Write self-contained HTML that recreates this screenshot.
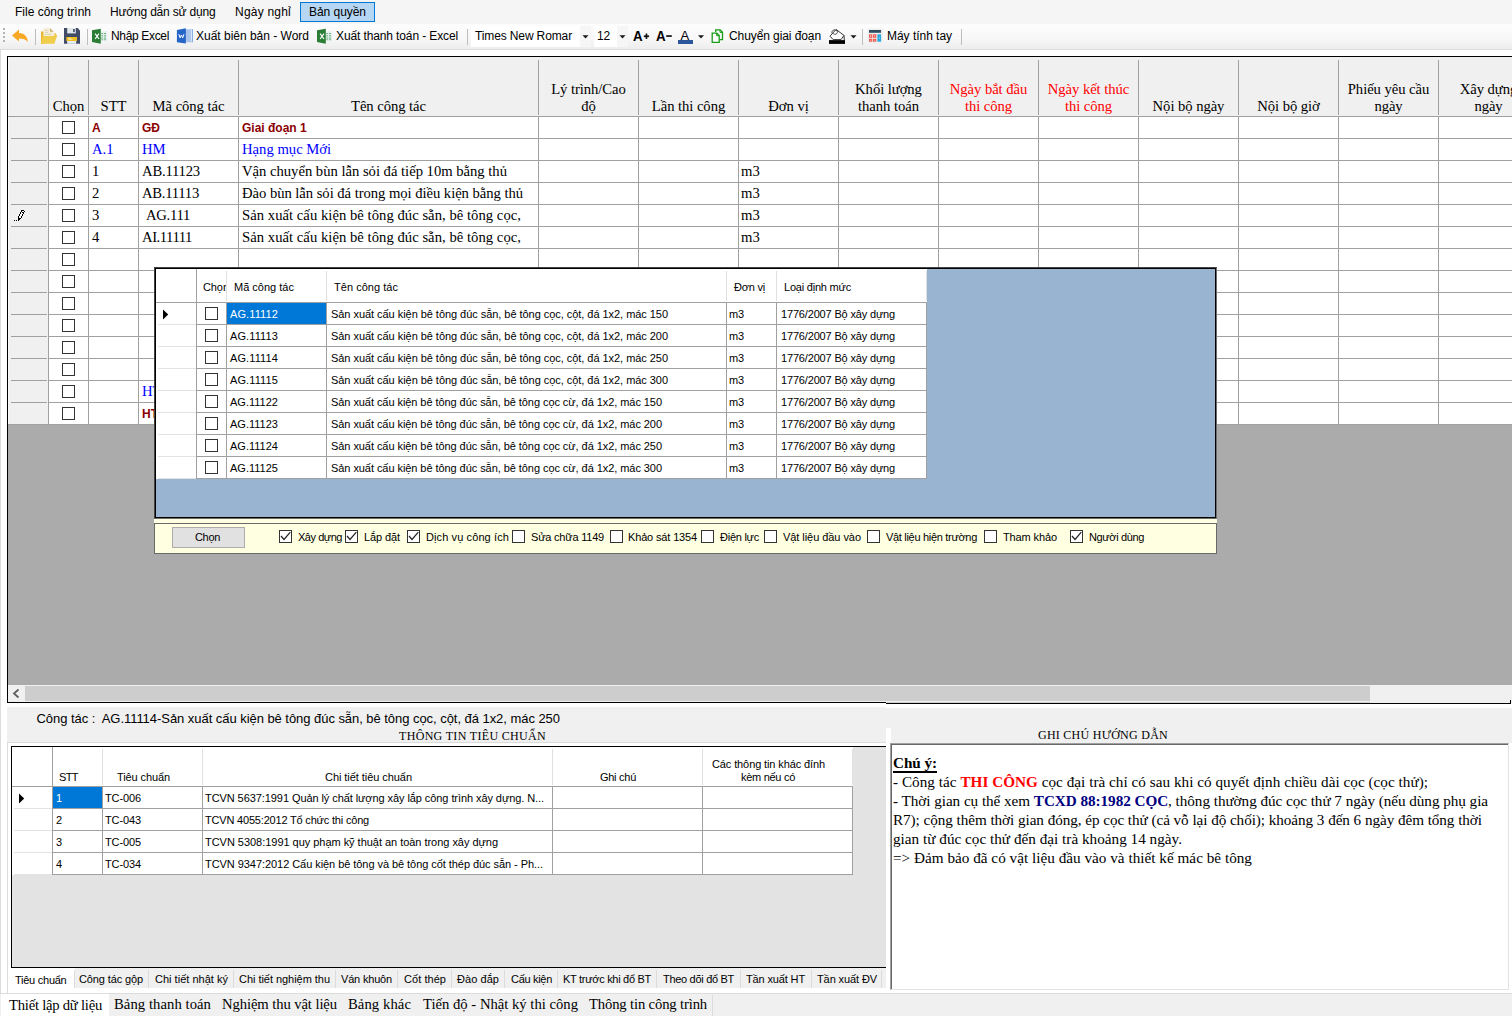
<!DOCTYPE html><html lang="vi"><head><meta charset="utf-8"><title>UI</title><style>
*{box-sizing:border-box;margin:0;padding:0}
html,body{width:1512px;height:1016px;overflow:hidden}
body{background:#f0f0f0;position:relative;font-family:"Liberation Sans",sans-serif;font-size:12px;color:#000}
.ab{position:absolute}
.t{position:absolute;white-space:pre;line-height:1}
.sf{font-family:"Liberation Serif",serif}
.vl{position:absolute;width:1px;background:#a0a0a0}
.hl{position:absolute;height:1px;background:#a0a0a0}
.cb{position:absolute;width:13px;height:13px;border:1px solid #333;background:#fff}
.mg{font-family:"Liberation Serif",serif;font-size:14.67px}
.hd{letter-spacing:-0.06px;position:absolute;font-family:"Liberation Serif",serif;font-size:14.67px;line-height:17px;text-align:center;white-space:pre}
.pp{font-size:11px}
.th{font-size:11px}
</style></head><body>
<div class="ab" style="left:0;top:0;width:1512px;height:24px;background:#f5f5f5"></div>
<div class="t" style="left:15px;top:6px;font-family:'Liberation Sans';font-size:12px;letter-spacing:-0.003px;">File công trình</div>
<div class="t" style="left:110px;top:6px;font-family:'Liberation Sans';font-size:12px;letter-spacing:-0.187px;">Hướng dẫn sử dụng</div>
<div class="t" style="left:235px;top:6px;font-family:'Liberation Sans';font-size:12px;letter-spacing:0.217px;">Ngày nghỉ</div>
<div class="ab" style="left:300px;top:2px;width:75px;height:20px;background:#b5d7f3;border:1px solid #0078d7"></div>
<div class="t" style="left:309px;top:6px;font-family:'Liberation Sans';font-size:12px;letter-spacing:-0.043px;">Bản quyền</div>
<div class="ab" style="left:0;top:24px;width:1512px;height:26px;background:linear-gradient(#fdfdfd,#f7f7f7 60%,#ededed);border-bottom:1px solid #dcdcdc"></div>
<div class="ab" style="left:3px;top:28px;width:2px;height:2px;background:#b4b4b4"></div>
<div class="ab" style="left:3px;top:32px;width:2px;height:2px;background:#b4b4b4"></div>
<div class="ab" style="left:3px;top:36px;width:2px;height:2px;background:#b4b4b4"></div>
<div class="ab" style="left:3px;top:40px;width:2px;height:2px;background:#b4b4b4"></div>
<div class="ab" style="left:35px;top:29px;width:1px;height:16px;background:#bdbdbd"></div>
<div class="ab" style="left:87px;top:29px;width:1px;height:16px;background:#bdbdbd"></div>
<div class="ab" style="left:467px;top:29px;width:1px;height:16px;background:#bdbdbd"></div>
<div class="ab" style="left:862px;top:29px;width:1px;height:16px;background:#bdbdbd"></div>
<div class="ab" style="left:961px;top:29px;width:1px;height:16px;background:#bdbdbd"></div>
<svg class="ab" style="left:0;top:24px" width="1000" height="26" viewBox="0 24 1000 26">
<path d="M12 35.5 L19 29.6 L19 33 C24.5 33 27.6 37 28 42 C25.5 39.2 23 38.4 19 38.4 L19 41.6 Z" fill="#f9a825"/>
<path d="M41 31.4 H44.5 V43.8 H41 Z" fill="#e8b830"/>
<path d="M43.4 28 H50 L53.7 31.7 V37 H43.4 Z" fill="#f6eed4"/><path d="M50 28 L53.7 31.7 H50 Z" fill="#cdb978"/><path d="M45 30.5H48M45 32.5H48M45 34.4H51.5" stroke="#d8d2c0" stroke-width="0.9"/>
<path d="M54.3 33 H55.4 L57.1 36 V36.6 H54.3 Z" fill="#eec643"/>
<path d="M41 43.8 L42.9 35.9 H57.1 L54.3 43.8 Z" fill="#f0cd4a"/>
<path d="M64 28 H77.6 L80 30.5 V43.8 H64 Z" fill="#414b68"/><rect x="67.2" y="28" width="8.6" height="5.4" fill="#e2e7ea"/><rect x="73" y="29" width="1.9" height="3.1" fill="#59637f"/><rect x="66.4" y="37" width="10.6" height="4" fill="#f0c020"/><rect x="68.3" y="38.2" width="3" height="1.4" fill="#fbf0c8"/><rect x="71.3" y="39" width="1.4" height="0.6" fill="#fbf0c8"/><rect x="67.2" y="41" width="9" height="2.8" fill="#e6ecf3"/>
<rect x="100.8" y="31.1" width="6.6" height="10.1" fill="#edf2f6"/>
<rect x="101.3" y="33" width="1.9" height="1.1" fill="#69b27a"/><rect x="104" y="33" width="2.1" height="1.1" fill="#69b27a"/>
<rect x="101.3" y="35.3" width="1.9" height="1.1" fill="#69b27a"/><rect x="104" y="35.3" width="2.1" height="1.1" fill="#69b27a"/>
<rect x="101.3" y="37.5" width="1.9" height="1.1" fill="#69b27a"/><rect x="104" y="37.5" width="2.1" height="1.1" fill="#69b27a"/>
<rect x="101.3" y="39.3" width="1.9" height="0.9" fill="#69b27a"/><rect x="104" y="39.3" width="2.1" height="0.9" fill="#69b27a"/>
<path d="M92 30.3 L100.8 28.7 V43.7 L92 42 Z" fill="#2a7d35"/>
<path d="M95.1 33.7 L99 39 M99 33.7 L95.1 39" stroke="#fff" stroke-width="1.2"/>
<rect x="325.8" y="31.1" width="6.6" height="10.1" fill="#edf2f6"/>
<rect x="326.3" y="33" width="1.9" height="1.1" fill="#69b27a"/><rect x="329" y="33" width="2.1" height="1.1" fill="#69b27a"/>
<rect x="326.3" y="35.3" width="1.9" height="1.1" fill="#69b27a"/><rect x="329" y="35.3" width="2.1" height="1.1" fill="#69b27a"/>
<rect x="326.3" y="37.5" width="1.9" height="1.1" fill="#69b27a"/><rect x="329" y="37.5" width="2.1" height="1.1" fill="#69b27a"/>
<rect x="326.3" y="39.3" width="1.9" height="0.9" fill="#69b27a"/><rect x="329" y="39.3" width="2.1" height="0.9" fill="#69b27a"/>
<path d="M317 30.3 L325.8 28.7 V43.7 L317 42 Z" fill="#2a7d35"/>
<path d="M320.1 33.7 L324 39 M324 33.7 L320.1 39" stroke="#fff" stroke-width="1.2"/>
<rect x="185.9" y="29.3" width="6.9" height="13" fill="#a9c3ea"/><rect x="190.9" y="30" width="1.1" height="11.6" fill="#dbe7f7"/><rect x="192" y="29.3" width="0.8" height="13" fill="#7fa6e0"/>
<path d="M176.9 30 L185.9 28.2 V43.6 L176.9 42.3 Z" fill="#2565c7"/>
<path d="M178.8 34.2 L180.1 37.8 L181.4 35 L182.7 37.8 L184 34.2" stroke="#fff" stroke-width="1" fill="none"/>
<rect x="471" y="26" width="109" height="21" fill="#fff"/><rect x="580" y="26" width="11" height="21" fill="#f6f6f6"/><rect x="594" y="26" width="23" height="21" fill="#fff"/><rect x="617" y="26" width="11" height="21" fill="#f6f6f6"/>
<path d="M582.5 35.3 H588.5 L585.5 38.4 Z" fill="#1a1a1a"/>
<path d="M619.5 35.3 H625.5 L622.5 38.4 Z" fill="#1a1a1a"/>
<path d="M698 35.3 H704 L701 38.4 Z" fill="#1a1a1a"/>
<path d="M850.5 35.3 H856.5 L853.5 38.4 Z" fill="#1a1a1a"/>
<rect x="643.8" y="35.4" width="5.3" height="1.7" fill="#111"/><rect x="645.6" y="33.5" width="1.7" height="5.4" fill="#111"/><rect x="666.2" y="35.2" width="5.6" height="1.7" fill="#111"/>
<rect x="678" y="40" width="15" height="4" fill="#2b579a"/>
<path d="M715.7 32 V29.9 H720.2 L722.5 32.2 V39.6 H719.9" fill="none" stroke="#169c16" stroke-width="1.3"/><path d="M720 30 V32.4 H722.4" fill="none" stroke="#169c16" stroke-width="1"/>
<path d="M712.2 33.2 H716.9 L719.2 35.5 V42.3 H712.2 Z" fill="#fff" stroke="#169c16" stroke-width="1.3"/><path d="M716.7 33.3 V35.7 H719.1" fill="none" stroke="#169c16" stroke-width="1"/>
<rect x="829" y="40.1" width="16" height="3.8" fill="#000"/>
<path d="M830 36.2 L836 29.4 L844 35.4 L841 39.6 H833.2 Z" fill="#fff" stroke="#3a3a3a" stroke-width="1"/><path d="M832.3 33.6 C830.6 30.6 834.6 28.6 837.2 31 C837.8 32.2 837.4 33.6 835.6 34.2 C834.4 34.4 833.4 34 832.8 33.2" fill="none" stroke="#3a3a3a" stroke-width="0.9"/><path d="M844 35.4 L844.4 40" stroke="#555" stroke-width="1.2"/>
<rect x="867.4" y="28.5" width="15.3" height="14.8" fill="#eeeeee"/><rect x="869" y="30" width="12" height="2.8" fill="#2f4f60"/>
<rect x="869" y="34.3" width="3.3" height="3.5" fill="#ec5a50"/><rect x="870.2" y="35.3" width="0.9" height="1.5" fill="#fbd5d2"/>
<rect x="869" y="38.8" width="3.3" height="2.9" fill="#ec5a50"/><rect x="870.2" y="39.8" width="0.9" height="0.8999999999999999" fill="#fbd5d2"/>
<rect x="873" y="34.3" width="3.3" height="3.5" fill="#ec5a50"/><rect x="874.2" y="35.3" width="0.9" height="1.5" fill="#fbd5d2"/>
<rect x="873" y="38.8" width="3.3" height="2.9" fill="#ec5a50"/><rect x="874.2" y="39.8" width="0.9" height="0.8999999999999999" fill="#fbd5d2"/>
<rect x="877.4" y="34.3" width="3.7" height="7.4" fill="#29a9e0"/><rect x="878.9" y="37.4" width="0.8" height="1.2" fill="#c9ecfb"/>
</svg>
<div class="t" style="left:111px;top:30px;font-family:'Liberation Sans';font-size:12px;letter-spacing:-0.338px;">Nhập Excel</div>
<div class="t" style="left:196px;top:30px;font-family:'Liberation Sans';font-size:12px;letter-spacing:-0.009px;">Xuất biên bản - Word</div>
<div class="t" style="left:336px;top:30px;font-family:'Liberation Sans';font-size:12px;letter-spacing:-0.12px;">Xuất thanh toán - Excel</div>
<div class="t" style="left:475px;top:30px;font-family:'Liberation Sans';font-size:12px;letter-spacing:-0.127px;">Times New Romar</div>
<div class="t" style="left:597px;top:30px;font-family:'Liberation Sans';font-size:12px;letter-spacing:-0.18px;">12</div>
<div class="t" style="left:633px;top:28.2px;font-size:15.5px;font-weight:bold;transform:scaleX(0.86);transform-origin:0 0">A</div>
<div class="t" style="left:656px;top:28.2px;font-size:15.5px;font-weight:bold;transform:scaleX(0.86);transform-origin:0 0">A</div>
<div class="t" style="left:680.6px;top:28.8px;font-size:13px">A</div>
<div class="t" style="left:729px;top:30px;font-family:'Liberation Sans';font-size:12px;letter-spacing:-0.088px;">Chuyển giai đoạn</div>
<div class="t" style="left:887px;top:30px;font-family:'Liberation Sans';font-size:12px;letter-spacing:-0.031px;">Máy tính tay</div>
<div class="ab" style="left:0;top:50px;width:1512px;height:657px;background:#fff;border-left:1px solid #dcdcdc"></div>
<div class="ab" style="left:7px;top:56px;width:1510px;height:647px;background:#ababab;border:1px solid #000"></div>
<div class="ab" style="left:8px;top:57px;width:1504px;height:59px;background:#f0f0f0"></div>
<div class="ab" style="left:8px;top:116px;width:41px;height:308px;background:#f0f0f0"></div>
<div class="ab" style="left:49px;top:116px;width:1463px;height:308px;background:#fff"></div>
<div class="ab" style="left:8px;top:57px;width:1px;height:367px;background:#fafafa"></div>
<div class="vl" style="left:48px;top:57px;height:367px"></div>
<div class="vl" style="left:88px;top:60px;height:55px"></div>
<div class="vl" style="left:88px;top:116px;height:308px"></div>
<div class="vl" style="left:138px;top:60px;height:55px"></div>
<div class="vl" style="left:138px;top:116px;height:308px"></div>
<div class="vl" style="left:238px;top:60px;height:55px"></div>
<div class="vl" style="left:238px;top:116px;height:308px"></div>
<div class="vl" style="left:538px;top:60px;height:55px"></div>
<div class="vl" style="left:538px;top:116px;height:308px"></div>
<div class="vl" style="left:638px;top:60px;height:55px"></div>
<div class="vl" style="left:638px;top:116px;height:308px"></div>
<div class="vl" style="left:738px;top:60px;height:55px"></div>
<div class="vl" style="left:738px;top:116px;height:308px"></div>
<div class="vl" style="left:838px;top:60px;height:55px"></div>
<div class="vl" style="left:838px;top:116px;height:308px"></div>
<div class="vl" style="left:938px;top:60px;height:55px"></div>
<div class="vl" style="left:938px;top:116px;height:308px"></div>
<div class="vl" style="left:1038px;top:60px;height:55px"></div>
<div class="vl" style="left:1038px;top:116px;height:308px"></div>
<div class="vl" style="left:1138px;top:60px;height:55px"></div>
<div class="vl" style="left:1138px;top:116px;height:308px"></div>
<div class="vl" style="left:1238px;top:60px;height:55px"></div>
<div class="vl" style="left:1238px;top:116px;height:308px"></div>
<div class="vl" style="left:1338px;top:60px;height:55px"></div>
<div class="vl" style="left:1338px;top:116px;height:308px"></div>
<div class="vl" style="left:1438px;top:60px;height:55px"></div>
<div class="vl" style="left:1438px;top:116px;height:308px"></div>
<div class="hl" style="left:8px;top:116px;width:1504px"></div>
<div class="hl" style="left:49px;top:138px;width:1463px"></div>
<div class="hl" style="left:11px;top:138px;width:36px"></div>
<div class="hl" style="left:49px;top:160px;width:1463px"></div>
<div class="hl" style="left:11px;top:160px;width:36px"></div>
<div class="hl" style="left:49px;top:182px;width:1463px"></div>
<div class="hl" style="left:11px;top:182px;width:36px"></div>
<div class="hl" style="left:49px;top:204px;width:1463px"></div>
<div class="hl" style="left:11px;top:204px;width:36px"></div>
<div class="hl" style="left:49px;top:226px;width:1463px"></div>
<div class="hl" style="left:11px;top:226px;width:36px"></div>
<div class="hl" style="left:49px;top:248px;width:1463px"></div>
<div class="hl" style="left:11px;top:248px;width:36px"></div>
<div class="hl" style="left:49px;top:270px;width:1463px"></div>
<div class="hl" style="left:11px;top:270px;width:36px"></div>
<div class="hl" style="left:49px;top:292px;width:1463px"></div>
<div class="hl" style="left:11px;top:292px;width:36px"></div>
<div class="hl" style="left:49px;top:314px;width:1463px"></div>
<div class="hl" style="left:11px;top:314px;width:36px"></div>
<div class="hl" style="left:49px;top:336px;width:1463px"></div>
<div class="hl" style="left:11px;top:336px;width:36px"></div>
<div class="hl" style="left:49px;top:358px;width:1463px"></div>
<div class="hl" style="left:11px;top:358px;width:36px"></div>
<div class="hl" style="left:49px;top:380px;width:1463px"></div>
<div class="hl" style="left:11px;top:380px;width:36px"></div>
<div class="hl" style="left:49px;top:402px;width:1463px"></div>
<div class="hl" style="left:11px;top:402px;width:36px"></div>
<div class="hl" style="left:49px;top:424px;width:1463px"></div>
<div class="hl" style="left:8px;top:424px;width:41px"></div>
<div class="cb" style="left:62px;top:121px"></div>
<div class="cb" style="left:62px;top:143px"></div>
<div class="cb" style="left:62px;top:165px"></div>
<div class="cb" style="left:62px;top:187px"></div>
<div class="cb" style="left:62px;top:209px"></div>
<div class="cb" style="left:62px;top:231px"></div>
<div class="cb" style="left:62px;top:253px"></div>
<div class="cb" style="left:62px;top:275px"></div>
<div class="cb" style="left:62px;top:297px"></div>
<div class="cb" style="left:62px;top:319px"></div>
<div class="cb" style="left:62px;top:341px"></div>
<div class="cb" style="left:62px;top:363px"></div>
<div class="cb" style="left:62px;top:385px"></div>
<div class="cb" style="left:62px;top:407px"></div>
<div class="hd" style="left:49px;top:98px;width:39px;color:#000">Chọn</div>
<div class="hd" style="left:89px;top:98px;width:49px;color:#000">STT</div>
<div class="hd" style="left:139px;top:98px;width:99px;color:#000">Mã công tác</div>
<div class="hd" style="left:239px;top:98px;width:299px;color:#000">Tên công tác</div>
<div class="hd" style="left:539px;top:81px;width:99px;color:#000">Lý trình/Cao<br>độ</div>
<div class="hd" style="left:639px;top:98px;width:99px;color:#000">Lần thi công</div>
<div class="hd" style="left:739px;top:98px;width:99px;color:#000">Đơn vị</div>
<div class="hd" style="left:839px;top:81px;width:99px;color:#000">Khối lượng<br>thanh toán</div>
<div class="hd" style="left:939px;top:81px;width:99px;color:#ff0000">Ngày bắt đầu<br>thi công</div>
<div class="hd" style="left:1039px;top:81px;width:99px;color:#ff0000">Ngày kết thúc<br>thi công</div>
<div class="hd" style="left:1139px;top:98px;width:99px;color:#000">Nội bộ ngày</div>
<div class="hd" style="left:1239px;top:98px;width:99px;color:#000">Nội bộ giờ</div>
<div class="hd" style="left:1339px;top:81px;width:99px;color:#000">Phiếu yêu cầu<br>ngày</div>
<div class="hd" style="left:1439px;top:81px;width:99px;color:#000">Xây dựng<br>ngày</div>
<div class="t mg" style="left:92px;top:120px;font-family:'Liberation Sans',sans-serif;font-weight:bold;font-size:12px;color:#8b0000;margin-top:2px;">A</div>
<div class="t mg" style="left:142px;top:120px;font-family:'Liberation Sans',sans-serif;font-weight:bold;font-size:12px;color:#8b0000;margin-top:2px;">GĐ</div>
<div class="t mg" style="left:242px;top:120px;font-family:'Liberation Sans',sans-serif;font-weight:bold;font-size:12px;color:#8b0000;margin-top:2px;">Giai đoạn 1</div>
<div class="t mg" style="left:92px;top:142px;color:#0000ff;">A.1</div>
<div class="t mg" style="left:142px;top:142px;color:#0000ff;">HM</div>
<div class="t mg" style="left:242px;top:142px;color:#0000ff;">Hạng mục Mới</div>
<div class="t mg" style="left:92px;top:164px;">1</div>
<div class="t" style="left:142px;top:164px;font-family:'Liberation Serif';font-size:14.67px;letter-spacing:-0.197px;">AB.11123</div>
<div class="t" style="left:242px;top:164px;font-family:'Liberation Serif';font-size:14.67px;letter-spacing:-0.019px;">Vận chuyển bùn lẫn sỏi đá tiếp 10m bằng thủ</div>
<div class="t mg" style="left:741px;top:164px;">m3</div>
<div class="t mg" style="left:92px;top:186px;">2</div>
<div class="t" style="left:142px;top:186px;font-family:'Liberation Serif';font-size:14.67px;letter-spacing:-0.256px;">AB.11113</div>
<div class="t" style="left:242px;top:186px;font-family:'Liberation Serif';font-size:14.67px;letter-spacing:-0.049px;">Đào bùn lẫn sỏi đá trong mọi điều kiện bằng thủ</div>
<div class="t mg" style="left:741px;top:186px;">m3</div>
<div class="t mg" style="left:92px;top:208px;">3</div>
<div class="t" style="left:146px;top:208px;font-family:'Liberation Serif';font-size:14.67px;letter-spacing:-0.289px;">AG.111</div>
<div class="t" style="left:242px;top:208px;font-family:'Liberation Serif';font-size:14.67px;letter-spacing:0.03px;">Sản xuất cấu kiện bê tông đúc sẵn, bê tông cọc,</div>
<div class="t mg" style="left:741px;top:208px;">m3</div>
<div class="t mg" style="left:92px;top:230px;">4</div>
<div class="t" style="left:142px;top:230px;font-family:'Liberation Serif';font-size:14.67px;letter-spacing:-0.449px;">AI.11111</div>
<div class="t" style="left:242px;top:230px;font-family:'Liberation Serif';font-size:14.67px;letter-spacing:0.03px;">Sản xuất cấu kiện bê tông đúc sẵn, bê tông cọc,</div>
<div class="t mg" style="left:741px;top:230px;">m3</div>
<div class="t mg" style="left:142px;top:384px;color:#0000ff;">HT</div>
<div class="t mg" style="left:142px;top:406px;font-family:'Liberation Sans',sans-serif;font-weight:bold;font-size:12px;color:#8b0000;margin-top:2px;">HT</div>
<svg class="ab" style="left:13px;top:209px" width="13" height="13" viewBox="0 0 13 13" shape-rendering="crispEdges"><path d="M9 2h1v1h-1zM10 2h1v1h-1zM8 3h1v1h-1zM8 4h1v1h-1zM9 4h1v1h-1zM7 5h1v1h-1zM8 5h1v1h-1zM7 6h1v1h-1zM8 6h1v1h-1zM6 7h1v1h-1zM7 7h1v1h-1zM6 8h1v1h-1zM7 8h1v1h-1z" fill="#fff"/><path d="M8 1h1v1h-1zM9 1h1v1h-1zM10 1h1v1h-1zM8 2h1v1h-1zM11 2h1v1h-1zM7 3h1v1h-1zM9 3h1v1h-1zM10 3h1v1h-1zM7 4h1v1h-1zM10 4h1v1h-1zM6 5h1v1h-1zM9 5h1v1h-1zM6 6h1v1h-1zM9 6h1v1h-1zM5 7h1v1h-1zM8 7h1v1h-1zM5 8h1v1h-1zM8 8h1v1h-1zM5 9h1v1h-1zM6 9h1v1h-1zM7 9h1v1h-1zM5 10h1v1h-1zM6 10h1v1h-1zM5 11h1v1h-1zM1 11h1v1h-1zM3 11h1v1h-1z" fill="#000"/></svg>
<div class="ab" style="left:8px;top:685px;width:1504px;height:17px;background:#f0f0f0"></div>
<div class="ab" style="left:25px;top:686px;width:1345px;height:15px;background:#cdcdcd"></div>
<svg class="ab" style="left:8px;top:685px" width="17" height="17" viewBox="0 0 17 17"><path d="M10.5 4.5 L6 8.5 L10.5 12.5" fill="none" stroke="#606060" stroke-width="1.8"/></svg>
<div class="ab" style="left:154px;top:267px;width:1063px;height:252px;background:#000;border:1px solid;border-color:#444 #6d6d6d #6d6d6d #444"></div>
<div class="ab" style="left:156px;top:269px;width:1059px;height:248px;background:#99b4d1"></div>
<div class="ab" style="left:156px;top:269px;width:771px;height:210px;background:#fff"></div>
<div class="ab" style="left:227px;top:303px;width:99px;height:21px;background:#0078d7"></div>
<div class="vl" style="left:196px;top:269px;height:210px"></div>
<div class="vl" style="left:226px;top:271px;height:30px;background:#e0e0e0"></div>
<div class="vl" style="left:226px;top:302px;height:177px"></div>
<div class="vl" style="left:326px;top:271px;height:30px;background:#e0e0e0"></div>
<div class="vl" style="left:326px;top:302px;height:177px"></div>
<div class="vl" style="left:726px;top:271px;height:30px;background:#e0e0e0"></div>
<div class="vl" style="left:726px;top:302px;height:177px"></div>
<div class="vl" style="left:776px;top:271px;height:30px;background:#e0e0e0"></div>
<div class="vl" style="left:776px;top:302px;height:177px"></div>
<div class="vl" style="left:926px;top:271px;height:30px;background:#e0e0e0"></div>
<div class="vl" style="left:926px;top:302px;height:177px"></div>
<div class="hl" style="left:156px;top:302px;width:771px"></div>
<div class="hl" style="left:197px;top:324px;width:730px"></div>
<div class="hl" style="left:158px;top:324px;width:38px;background:#e3e3e3"></div>
<div class="hl" style="left:197px;top:346px;width:730px"></div>
<div class="hl" style="left:158px;top:346px;width:38px;background:#e3e3e3"></div>
<div class="hl" style="left:197px;top:368px;width:730px"></div>
<div class="hl" style="left:158px;top:368px;width:38px;background:#e3e3e3"></div>
<div class="hl" style="left:197px;top:390px;width:730px"></div>
<div class="hl" style="left:158px;top:390px;width:38px;background:#e3e3e3"></div>
<div class="hl" style="left:197px;top:412px;width:730px"></div>
<div class="hl" style="left:158px;top:412px;width:38px;background:#e3e3e3"></div>
<div class="hl" style="left:197px;top:434px;width:730px"></div>
<div class="hl" style="left:158px;top:434px;width:38px;background:#e3e3e3"></div>
<div class="hl" style="left:197px;top:456px;width:730px"></div>
<div class="hl" style="left:158px;top:456px;width:38px;background:#e3e3e3"></div>
<div class="hl" style="left:197px;top:478px;width:730px"></div>
<div class="hl" style="left:158px;top:478px;width:38px;background:#e3e3e3"></div>
<svg class="ab" style="left:162px;top:308px" width="8" height="13" viewBox="0 0 8 13"><path d="M1 1.5 L6.2 6.5 L1 11.5 Z" fill="#000"/></svg>
<div class="ab" style="left:197px;top:271px;width:29px;height:30px;overflow:hidden"><div class="t pp" style="left:6px;top:10.689999999999998px;letter-spacing:-0.1px">Chọn</div></div>
<div class="t" style="left:234px;top:281.69px;font-family:'Liberation Sans';font-size:11px;letter-spacing:0.007px;">Mã công tác</div>
<div class="t" style="left:334px;top:281.69px;font-family:'Liberation Sans';font-size:11px;letter-spacing:0.034px;">Tên công tác</div>
<div class="t" style="left:734px;top:281.69px;font-family:'Liberation Sans';font-size:11px;letter-spacing:-0.214px;">Đơn vị</div>
<div class="t" style="left:784px;top:281.69px;font-family:'Liberation Sans';font-size:11px;letter-spacing:-0.21px;">Loại định mức</div>
<div class="cb" style="left:205px;top:307px"></div>
<div class="t" style="left:230px;top:308.69px;font-family:'Liberation Sans';font-size:11px;letter-spacing:0.113px;color:#fff;">AG.11112</div>
<div class="t" style="left:331px;top:308.69px;font-family:'Liberation Sans';font-size:11px;letter-spacing:-0.044px;">Sản xuất cấu kiện bê tông đúc sẵn, bê tông cọc, cột, đá 1x2, mác 150</div>
<div class="t" style="left:729px;top:308.69px;font-family:'Liberation Sans';font-size:11px;letter-spacing:-0.141px;">m3</div>
<div class="t" style="left:781px;top:308.69px;font-family:'Liberation Sans';font-size:11px;letter-spacing:-0.165px;">1776/2007 Bộ xây dựng</div>
<div class="cb" style="left:205px;top:329px"></div>
<div class="t" style="left:230px;top:330.69px;font-family:'Liberation Sans';font-size:11px;letter-spacing:0.113px;">AG.11113</div>
<div class="t" style="left:331px;top:330.69px;font-family:'Liberation Sans';font-size:11px;letter-spacing:-0.044px;">Sản xuất cấu kiện bê tông đúc sẵn, bê tông cọc, cột, đá 1x2, mác 200</div>
<div class="t" style="left:729px;top:330.69px;font-family:'Liberation Sans';font-size:11px;letter-spacing:-0.141px;">m3</div>
<div class="t" style="left:781px;top:330.69px;font-family:'Liberation Sans';font-size:11px;letter-spacing:-0.165px;">1776/2007 Bộ xây dựng</div>
<div class="cb" style="left:205px;top:351px"></div>
<div class="t" style="left:230px;top:352.69px;font-family:'Liberation Sans';font-size:11px;letter-spacing:0.113px;">AG.11114</div>
<div class="t" style="left:331px;top:352.69px;font-family:'Liberation Sans';font-size:11px;letter-spacing:-0.044px;">Sản xuất cấu kiện bê tông đúc sẵn, bê tông cọc, cột, đá 1x2, mác 250</div>
<div class="t" style="left:729px;top:352.69px;font-family:'Liberation Sans';font-size:11px;letter-spacing:-0.141px;">m3</div>
<div class="t" style="left:781px;top:352.69px;font-family:'Liberation Sans';font-size:11px;letter-spacing:-0.165px;">1776/2007 Bộ xây dựng</div>
<div class="cb" style="left:205px;top:373px"></div>
<div class="t" style="left:230px;top:374.69px;font-family:'Liberation Sans';font-size:11px;letter-spacing:0.113px;">AG.11115</div>
<div class="t" style="left:331px;top:374.69px;font-family:'Liberation Sans';font-size:11px;letter-spacing:-0.044px;">Sản xuất cấu kiện bê tông đúc sẵn, bê tông cọc, cột, đá 1x2, mác 300</div>
<div class="t" style="left:729px;top:374.69px;font-family:'Liberation Sans';font-size:11px;letter-spacing:-0.141px;">m3</div>
<div class="t" style="left:781px;top:374.69px;font-family:'Liberation Sans';font-size:11px;letter-spacing:-0.165px;">1776/2007 Bộ xây dựng</div>
<div class="cb" style="left:205px;top:395px"></div>
<div class="t" style="left:230px;top:396.69px;font-family:'Liberation Sans';font-size:11px;letter-spacing:0.012px;">AG.11122</div>
<div class="t" style="left:331px;top:396.69px;font-family:'Liberation Sans';font-size:11px;letter-spacing:-0.063px;">Sản xuất cấu kiện bê tông đúc sẵn, bê tông cọc cừ, đá 1x2, mác 150</div>
<div class="t" style="left:729px;top:396.69px;font-family:'Liberation Sans';font-size:11px;letter-spacing:-0.141px;">m3</div>
<div class="t" style="left:781px;top:396.69px;font-family:'Liberation Sans';font-size:11px;letter-spacing:-0.165px;">1776/2007 Bộ xây dựng</div>
<div class="cb" style="left:205px;top:417px"></div>
<div class="t" style="left:230px;top:418.69px;font-family:'Liberation Sans';font-size:11px;letter-spacing:0.012px;">AG.11123</div>
<div class="t" style="left:331px;top:418.69px;font-family:'Liberation Sans';font-size:11px;letter-spacing:-0.063px;">Sản xuất cấu kiện bê tông đúc sẵn, bê tông cọc cừ, đá 1x2, mác 200</div>
<div class="t" style="left:729px;top:418.69px;font-family:'Liberation Sans';font-size:11px;letter-spacing:-0.141px;">m3</div>
<div class="t" style="left:781px;top:418.69px;font-family:'Liberation Sans';font-size:11px;letter-spacing:-0.165px;">1776/2007 Bộ xây dựng</div>
<div class="cb" style="left:205px;top:439px"></div>
<div class="t" style="left:230px;top:440.69px;font-family:'Liberation Sans';font-size:11px;letter-spacing:0.012px;">AG.11124</div>
<div class="t" style="left:331px;top:440.69px;font-family:'Liberation Sans';font-size:11px;letter-spacing:-0.063px;">Sản xuất cấu kiện bê tông đúc sẵn, bê tông cọc cừ, đá 1x2, mác 250</div>
<div class="t" style="left:729px;top:440.69px;font-family:'Liberation Sans';font-size:11px;letter-spacing:-0.141px;">m3</div>
<div class="t" style="left:781px;top:440.69px;font-family:'Liberation Sans';font-size:11px;letter-spacing:-0.165px;">1776/2007 Bộ xây dựng</div>
<div class="cb" style="left:205px;top:461px"></div>
<div class="t" style="left:230px;top:462.69px;font-family:'Liberation Sans';font-size:11px;letter-spacing:0.012px;">AG.11125</div>
<div class="t" style="left:331px;top:462.69px;font-family:'Liberation Sans';font-size:11px;letter-spacing:-0.063px;">Sản xuất cấu kiện bê tông đúc sẵn, bê tông cọc cừ, đá 1x2, mác 300</div>
<div class="t" style="left:729px;top:462.69px;font-family:'Liberation Sans';font-size:11px;letter-spacing:-0.141px;">m3</div>
<div class="t" style="left:781px;top:462.69px;font-family:'Liberation Sans';font-size:11px;letter-spacing:-0.165px;">1776/2007 Bộ xây dựng</div>
<div class="ab" style="left:154px;top:519px;width:1063px;height:35px;background:#ffffe1"></div>
<div class="ab" style="left:154px;top:523px;width:1063px;height:31px;border:1px solid #696969"></div>
<div class="ab" style="left:172px;top:527px;width:73px;height:21px;background:#e1e1e1;border:1px solid #adadad"></div>
<div class="t" style="left:195px;top:532.19px;font-family:'Liberation Sans';font-size:11px;letter-spacing:-0.324px;">Chọn</div>
<div class="cb" style="left:279px;top:530px"></div>
<svg class="ab" style="left:279px;top:530px" width="13" height="13" viewBox="0 0 13 13"><path d="M2 6 L5 9.5 L11.3 2.2" fill="none" stroke="#222" stroke-width="1.2"/></svg>
<div class="t" style="left:298px;top:531.69px;font-family:'Liberation Sans';font-size:11px;letter-spacing:-0.467px;">Xây dựng</div>
<div class="cb" style="left:345px;top:530px"></div>
<svg class="ab" style="left:345px;top:530px" width="13" height="13" viewBox="0 0 13 13"><path d="M2 6 L5 9.5 L11.3 2.2" fill="none" stroke="#222" stroke-width="1.2"/></svg>
<div class="t" style="left:364px;top:531.69px;font-family:'Liberation Sans';font-size:11px;letter-spacing:-0.1px;">Lắp đặt</div>
<div class="cb" style="left:407px;top:530px"></div>
<svg class="ab" style="left:407px;top:530px" width="13" height="13" viewBox="0 0 13 13"><path d="M2 6 L5 9.5 L11.3 2.2" fill="none" stroke="#222" stroke-width="1.2"/></svg>
<div class="t" style="left:426px;top:531.69px;font-family:'Liberation Sans';font-size:11px;letter-spacing:0.104px;">Dịch vụ công ích</div>
<div class="cb" style="left:512px;top:530px"></div>
<div class="t" style="left:531px;top:531.69px;font-family:'Liberation Sans';font-size:11px;letter-spacing:-0.207px;">Sửa chữa 1149</div>
<div class="cb" style="left:610px;top:530px"></div>
<div class="t" style="left:628px;top:531.69px;font-family:'Liberation Sans';font-size:11px;letter-spacing:-0.15px;">Khảo sát 1354</div>
<div class="cb" style="left:701px;top:530px"></div>
<div class="t" style="left:720px;top:531.69px;font-family:'Liberation Sans';font-size:11px;letter-spacing:-0.25px;">Điện lực</div>
<div class="cb" style="left:764px;top:530px"></div>
<div class="t" style="left:783px;top:531.69px;font-family:'Liberation Sans';font-size:11px;letter-spacing:-0.056px;">Vật liệu đầu vào</div>
<div class="cb" style="left:867px;top:530px"></div>
<div class="t" style="left:886px;top:531.69px;font-family:'Liberation Sans';font-size:11px;letter-spacing:-0.307px;">Vật liệu hiện trường</div>
<div class="cb" style="left:984px;top:530px"></div>
<div class="t" style="left:1003px;top:531.69px;font-family:'Liberation Sans';font-size:11px;letter-spacing:-0.115px;">Tham khảo</div>
<div class="cb" style="left:1070px;top:530px"></div>
<svg class="ab" style="left:1070px;top:530px" width="13" height="13" viewBox="0 0 13 13"><path d="M2 6 L5 9.5 L11.3 2.2" fill="none" stroke="#222" stroke-width="1.2"/></svg>
<div class="t" style="left:1089px;top:531.69px;font-family:'Liberation Sans';font-size:11px;letter-spacing:-0.361px;">Người dùng</div>
<div class="ab" style="left:0;top:707px;width:1512px;height:309px;background:#f0f0f0"></div>
<div class="ab" style="left:0;top:707px;width:7px;height:287px;background:#fff;border-left:1px solid #dcdcdc"></div>
<div class="ab" style="left:7px;top:742px;width:880px;height:1px;background:#dcdcdc"></div>
<div class="ab" style="left:7px;top:743px;width:879px;height:251px;background:#fff;border-left:1px solid #dcdcdc"></div>
<div class="ab" style="left:74px;top:968px;width:812px;height:20px;background:#f0f0f0"></div>
<div class="ab" style="left:886px;top:990px;width:626px;height:4px;background:#fff"></div>
<div class="ab" style="left:886px;top:728px;width:5px;height:266px;background:#fff"></div>
<div class="ab" style="left:886px;top:702px;width:484px;height:1px;background:#cdcdcd"></div>
<div class="ab" style="left:1370px;top:702px;width:142px;height:1px;background:#f0f0f0"></div>
<div class="ab" style="left:886px;top:703px;width:625px;height:1px;background:#000"></div>
<div class="ab" style="left:1510px;top:700px;width:1px;height:4px;background:#000"></div>
<div class="ab" style="left:886px;top:704px;width:626px;height:4px;background:#fff"></div>
<div class="t" style="left:36.5px;top:712.0px;font-family:'Liberation Sans';font-size:13px;letter-spacing:-0.046px;">Công tác :  AG.11114-Sản xuất cấu kiện bê tông đúc sẵn, bê tông cọc, cột, đá 1x2, mác 250</div>
<div class="t" style="left:399px;top:730.15px;font-family:'Liberation Serif';font-size:12px;letter-spacing:0.323px;">THÔNG TIN TIÊU CHUẨN</div>
<div class="t" style="left:1038px;top:729.45px;font-family:'Liberation Serif';font-size:12px;letter-spacing:0.256px;">GHI CHÚ HƯỚNG DẪN</div>
<div class="ab" style="left:11px;top:746px;width:875px;height:222px;background:#e3e3e3;border:1px solid #000;border-right:none"></div>
<div class="ab" style="left:12px;top:747px;width:841px;height:128px;background:#fff"></div>
<div class="ab" style="left:53px;top:787px;width:49px;height:21px;background:#0078d7"></div>
<div class="vl" style="left:52px;top:747px;height:128px"></div>
<div class="vl" style="left:102px;top:749px;height:36px;background:#e0e0e0"></div>
<div class="vl" style="left:102px;top:786px;height:89px"></div>
<div class="vl" style="left:202px;top:749px;height:36px;background:#e0e0e0"></div>
<div class="vl" style="left:202px;top:786px;height:89px"></div>
<div class="vl" style="left:552px;top:749px;height:36px;background:#e0e0e0"></div>
<div class="vl" style="left:552px;top:786px;height:89px"></div>
<div class="vl" style="left:702px;top:749px;height:36px;background:#e0e0e0"></div>
<div class="vl" style="left:702px;top:786px;height:89px"></div>
<div class="vl" style="left:852px;top:749px;height:36px;background:#e0e0e0"></div>
<div class="vl" style="left:852px;top:786px;height:89px"></div>
<div class="hl" style="left:12px;top:786px;width:841px"></div>
<div class="hl" style="left:53px;top:808px;width:800px"></div>
<div class="hl" style="left:14px;top:808px;width:38px;background:#e3e3e3"></div>
<div class="hl" style="left:53px;top:830px;width:800px"></div>
<div class="hl" style="left:14px;top:830px;width:38px;background:#e3e3e3"></div>
<div class="hl" style="left:53px;top:852px;width:800px"></div>
<div class="hl" style="left:14px;top:852px;width:38px;background:#e3e3e3"></div>
<div class="hl" style="left:53px;top:874px;width:800px"></div>
<div class="hl" style="left:14px;top:874px;width:38px;background:#e3e3e3"></div>
<svg class="ab" style="left:18px;top:792px" width="8" height="13" viewBox="0 0 8 13"><path d="M1 1.5 L6.2 6.5 L1 11.5 Z" fill="#000"/></svg>
<div class="t" style="left:59px;top:771.89px;font-family:'Liberation Sans';font-size:11px;letter-spacing:-0.594px;">STT</div>
<div class="t" style="left:117px;top:771.89px;font-family:'Liberation Sans';font-size:11px;letter-spacing:-0.103px;">Tiêu chuẩn</div>
<div class="t" style="left:325px;top:771.89px;font-family:'Liberation Sans';font-size:11px;letter-spacing:-0.056px;">Chi tiết tiêu chuẩn</div>
<div class="t" style="left:600px;top:771.89px;font-family:'Liberation Sans';font-size:11px;letter-spacing:-0.275px;">Ghi chú</div>
<div class="t" style="left:712px;top:758.69px;font-family:'Liberation Sans';font-size:11px;letter-spacing:-0.112px;">Các thông tin khác đính</div>
<div class="t" style="left:741px;top:771.89px;font-family:'Liberation Sans';font-size:11px;letter-spacing:-0.287px;">kèm nếu có</div>
<div class="t th" style="left:56px;top:793.09px;color:#fff">1</div>
<div class="t" style="left:105px;top:793.09px;font-family:'Liberation Sans';font-size:11px;letter-spacing:-0.115px;">TC-006</div>
<div class="t" style="left:205px;top:793.09px;font-family:'Liberation Sans';font-size:11px;letter-spacing:-0.077px;">TCVN 5637:1991 Quản lý chất lượng xây lắp công trình xây dựng. N...</div>
<div class="t th" style="left:56px;top:815.09px;">2</div>
<div class="t" style="left:105px;top:815.09px;font-family:'Liberation Sans';font-size:11px;letter-spacing:-0.115px;">TC-043</div>
<div class="t" style="left:205px;top:815.09px;font-family:'Liberation Sans';font-size:11px;letter-spacing:-0.188px;">TCVN 4055:2012 Tổ chức thi công</div>
<div class="t th" style="left:56px;top:837.09px;">3</div>
<div class="t" style="left:105px;top:837.09px;font-family:'Liberation Sans';font-size:11px;letter-spacing:-0.115px;">TC-005</div>
<div class="t" style="left:205px;top:837.09px;font-family:'Liberation Sans';font-size:11px;letter-spacing:-0.032px;">TCVN 5308:1991 quy phạm kỹ thuật an toàn trong xây dựng</div>
<div class="t th" style="left:56px;top:859.09px;">4</div>
<div class="t" style="left:105px;top:859.09px;font-family:'Liberation Sans';font-size:11px;letter-spacing:-0.115px;">TC-034</div>
<div class="t" style="left:205px;top:859.09px;font-family:'Liberation Sans';font-size:11px;letter-spacing:-0.057px;">TCVN 9347:2012 Cấu kiện bê tông và bê tông cốt thép đúc sẵn - Ph...</div>
<div class="ab" style="left:8px;top:968px;width:67px;height:22px;background:#fff"></div>
<div class="ab" style="left:74px;top:970px;width:75px;height:18px;background:#f0f0f0;border-right:1px solid #dcdcdc;border-left:1px solid #dcdcdc"></div>
<div class="ab" style="left:148px;top:970px;width:86px;height:18px;background:#f0f0f0;border-right:1px solid #dcdcdc;border-left:1px solid #dcdcdc"></div>
<div class="ab" style="left:233px;top:970px;width:103px;height:18px;background:#f0f0f0;border-right:1px solid #dcdcdc;border-left:1px solid #dcdcdc"></div>
<div class="ab" style="left:335px;top:970px;width:63px;height:18px;background:#f0f0f0;border-right:1px solid #dcdcdc;border-left:1px solid #dcdcdc"></div>
<div class="ab" style="left:397px;top:970px;width:55px;height:18px;background:#f0f0f0;border-right:1px solid #dcdcdc;border-left:1px solid #dcdcdc"></div>
<div class="ab" style="left:451px;top:970px;width:54px;height:18px;background:#f0f0f0;border-right:1px solid #dcdcdc;border-left:1px solid #dcdcdc"></div>
<div class="ab" style="left:504px;top:970px;width:54px;height:18px;background:#f0f0f0;border-right:1px solid #dcdcdc;border-left:1px solid #dcdcdc"></div>
<div class="ab" style="left:557px;top:970px;width:100px;height:18px;background:#f0f0f0;border-right:1px solid #dcdcdc;border-left:1px solid #dcdcdc"></div>
<div class="ab" style="left:656px;top:970px;width:85px;height:18px;background:#f0f0f0;border-right:1px solid #dcdcdc;border-left:1px solid #dcdcdc"></div>
<div class="ab" style="left:740px;top:970px;width:72px;height:18px;background:#f0f0f0;border-right:1px solid #dcdcdc;border-left:1px solid #dcdcdc"></div>
<div class="ab" style="left:811px;top:970px;width:71px;height:18px;background:#f0f0f0;border-right:1px solid #dcdcdc;border-left:1px solid #dcdcdc"></div>
<div class="t" style="left:15px;top:975.29px;font-family:'Liberation Sans';font-size:11px;letter-spacing:-0.253px;">Tiêu chuẩn</div>
<div class="t" style="left:79px;top:974.19px;font-family:'Liberation Sans';font-size:11px;letter-spacing:-0.12px;">Công tác gộp</div>
<div class="t" style="left:155px;top:974.19px;font-family:'Liberation Sans';font-size:11px;letter-spacing:0.015px;">Chi tiết nhật ký</div>
<div class="t" style="left:239px;top:974.19px;font-family:'Liberation Sans';font-size:11px;letter-spacing:-0.038px;">Chi tiết nghiệm thu</div>
<div class="t" style="left:341px;top:974.19px;font-family:'Liberation Sans';font-size:11px;letter-spacing:-0.179px;">Ván khuôn</div>
<div class="t" style="left:404px;top:974.19px;font-family:'Liberation Sans';font-size:11px;letter-spacing:0.051px;">Cốt thép</div>
<div class="t" style="left:457px;top:974.19px;font-family:'Liberation Sans';font-size:11px;letter-spacing:0.058px;">Đào đắp</div>
<div class="t" style="left:511px;top:974.19px;font-family:'Liberation Sans';font-size:11px;letter-spacing:-0.303px;">Cấu kiện</div>
<div class="t" style="left:563px;top:974.19px;font-family:'Liberation Sans';font-size:11px;letter-spacing:-0.291px;">KT trước khi đổ BT</div>
<div class="t" style="left:663px;top:974.19px;font-family:'Liberation Sans';font-size:11px;letter-spacing:-0.301px;">Theo dõi đổ BT</div>
<div class="t" style="left:746px;top:974.19px;font-family:'Liberation Sans';font-size:11px;letter-spacing:-0.139px;">Tần xuất HT</div>
<div class="t" style="left:817px;top:974.19px;font-family:'Liberation Sans';font-size:11px;letter-spacing:-0.104px;">Tần xuất ĐV</div>
<div class="ab" style="left:0;top:993px;width:1512px;height:1px;background:#dcdcdc"></div>
<div class="ab" style="left:1px;top:994px;width:108px;height:22px;background:#fff"></div>
<div class="ab" style="left:109px;top:995px;width:107px;height:21px;background:#f0f0f0;border-right:1px solid #dcdcdc"></div>
<div class="ab" style="left:215px;top:995px;width:128px;height:21px;background:#f0f0f0;border-right:1px solid #dcdcdc"></div>
<div class="ab" style="left:342px;top:995px;width:75px;height:21px;background:#f0f0f0;border-right:1px solid #dcdcdc"></div>
<div class="ab" style="left:416px;top:995px;width:168px;height:21px;background:#f0f0f0;border-right:1px solid #dcdcdc"></div>
<div class="ab" style="left:583px;top:995px;width:130px;height:21px;background:#f0f0f0;border-right:1px solid #dcdcdc"></div>
<div class="t" style="left:9px;top:998.01px;font-family:'Liberation Serif';font-size:14.67px;letter-spacing:-0.24px;">Thiết lập dữ liệu</div>
<div class="t" style="left:114px;top:996.71px;font-family:'Liberation Serif';font-size:14.67px;letter-spacing:0.062px;">Bảng thanh toán</div>
<div class="t" style="left:222px;top:996.71px;font-family:'Liberation Serif';font-size:14.67px;letter-spacing:-0.096px;">Nghiệm thu vật liệu</div>
<div class="t" style="left:348px;top:996.71px;font-family:'Liberation Serif';font-size:14.67px;letter-spacing:0.08px;">Bảng khác</div>
<div class="t" style="left:423px;top:996.71px;font-family:'Liberation Serif';font-size:14.67px;letter-spacing:0.001px;">Tiến độ - Nhật ký thi công</div>
<div class="t" style="left:589px;top:996.71px;font-family:'Liberation Serif';font-size:14.67px;letter-spacing:-0.145px;">Thông tin công trình</div>
<div class="ab" style="left:890px;top:743px;width:1619px;height:247px;background:#fff"></div>
<div class="ab" style="left:890px;top:743px;width:619px;height:247px;background:#fff;border-top:1px solid #a0a0a0;border-left:1px solid #a0a0a0;border-right:1px solid #e3e3e3;border-bottom:1px solid #e3e3e3"></div>
<div class="ab" style="left:891px;top:744px;width:617px;height:245px;border-top:1px solid #696969;border-left:1px solid #696969"></div>
<div class="t" style="left:893px;top:755.27px;font-family:'Liberation Serif';font-size:15.2px;letter-spacing:-0.052px;"><b style="text-decoration:underline;text-decoration-thickness:1.5px;text-underline-offset:2.5px">Chú ý:</b></div>
<div class="t" style="left:893px;top:774.27px;font-family:'Liberation Serif';font-size:15.2px;letter-spacing:0.03px;">- Công tác <b style="color:#ff0000">THI CÔNG</b> cọc đại trà chỉ có sau khi có quyết định chiều dài cọc (cọc thử);</div>
<div class="t" style="left:893px;top:793.27px;font-family:'Liberation Serif';font-size:15.2px;letter-spacing:-0.046px;">- Thời gian cụ thể xem <b style="color:#000080">TCXD 88:1982 CỌC</b>, thông thường đúc cọc thử 7 ngày (nếu dùng phụ gia</div>
<div class="t" style="left:893px;top:812.27px;font-family:'Liberation Serif';font-size:15.2px;letter-spacing:-0.058px;">R7); cộng thêm thời gian đóng, ép cọc thử (cả vỗ lại độ chối); khoảng 3 đến 6 ngày đêm tổng thời</div>
<div class="t" style="left:893px;top:831.27px;font-family:'Liberation Serif';font-size:15.2px;letter-spacing:0.014px;">gian từ đúc cọc thử đến đại trà khoảng 14 ngày.</div>
<div class="t" style="left:893px;top:850.27px;font-family:'Liberation Serif';font-size:15.2px;letter-spacing:0.019px;">=&gt; Đảm bảo đã có vật liệu đầu vào và thiết kế mác bê tông</div>
</body></html>
